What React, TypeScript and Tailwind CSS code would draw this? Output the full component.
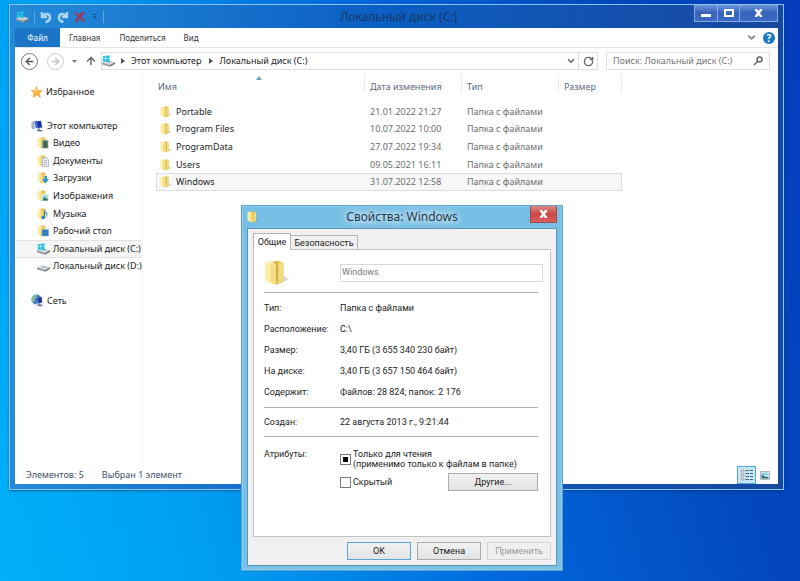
import type { ReactNode } from "react";
import { ArrowLeft, ArrowRight, ArrowUp, ChevronDown, RotateCw } from "lucide-react";

const places = [
  { name: "Видео", kind: "video" },
  { name: "Документы", kind: "docs" },
  { name: "Загрузки", kind: "downloads" },
  { name: "Изображения", kind: "pictures" },
  { name: "Музыка", kind: "music" },
  { name: "Рабочий стол", kind: "desktop" },
];

const files = [
  { name: "Portable", date: "21.01.2022 21:27" },
  { name: "Program Files", date: "10.07.2022 10:00" },
  { name: "ProgramData", date: "27.07.2022 19:34" },
  { name: "Users", date: "09.05.2021 16:11" },
  { name: "Windows", date: "31.07.2022 12:58", selected: true },
];

const details = [
  ["Тип:", "Папка с файлами"],
  ["Расположение:", "C:\\"],
  ["Размер:", "3,40 ГБ (3 655 340 230 байт)"],
  ["На диске:", "3,40 ГБ (3 657 150 464 байт)"],
  ["Содержит:", "Файлов: 28 824; папок: 2 176"],
];

function Drive({ system = false }: { system?: boolean }) {
  return (
    <svg viewBox="0 0 13 12" className="h-3 w-[13px] shrink-0" aria-hidden="true">
      <path d="M0 7.5 5 5l8 2.3-5 2.6z" fill="#d3d7da" />
      <path d="M0 7.5v1.7l8 2.6V9.9z" fill="#8f979c" />
      <path d="m8 9.9 5-2.6V9l-5 2.8z" fill="#6c757b" />
      <path d="m5 7.2 2.6-1.1 2.4.7-2.5 1.2z" fill="#b6bcc0" />
      <path d="M10.8 9.2h1" stroke="#6fd46a" strokeWidth=".8" />
      {system && <path d="M.8 1.2 3.6.8v2.8H.8zM4.1.7 7.6.2v3.4H4.1zM.8 4.1h2.800v2.700L.8 6.500zM4.1 4.1h3.500v3l-3.500-.3z" fill="#20bfe0" />}
    </svg>
  );
}

function Folder({ className, kind }: { className: string; kind?: string }) {
  return (
    <svg viewBox="0 0 24 24" className={className} aria-hidden="true">
      <path d="m11 23 12-5-4-3-8 2z" fill="#888" opacity=".35" />
      <path d="M5 2 13 .5 18 3v17l-8 3z" fill="#e6c65e" />
      <path d="m13 3 5-1v17l-5 2.500z" fill="#f3dc80" />
      <path d="m8 3 5-1v17l-3 3z" fill="#cfae4a" />
      <path d="M1 2.500 6 1l5 3v19L1 19z" fill="#fbeeA6" />
      <path d="m6 4 5 1v18l-5-2z" fill="#f4dd82" />
      {kind === "video" && <path d="M11 7h11v15H11zM13 9v2m0 2v2m0 2v2M20 9v2m0 2v2m0 2v2" fill="#40604c" stroke="#8fa799" strokeWidth="1.5" />}
      {kind === "docs" && <path d="M11 6h9l3 3v14H11zM13 11h7m-7 4h7m-7 4h7" fill="#eef1fa" stroke="#a0a7cc" strokeWidth="1.5" />}
      {kind === "downloads" && <path d="M15 8h5v6h4l-7 9-7-9h5z" fill="#2798dd" />}
      {kind === "pictures" && (
        <>
          <path d="M10 9h13v13H10z" fill="#a7ddec" stroke="#fff" />
          <path d="m11 21 4-8 3 5 2-2 2 5z" fill="#33715d" />
        </>
      )}
      {kind === "music" && <path d="M14 3c1 5 8 5 7 12h-2c0-3-1-5-3-6v9c0 6-8 5-7 1 0-3 3-4 5-3z" fill="#2682d0" />}
      {kind === "desktop" && <path d="M10 9h13v13H10z" fill="#397dc8" stroke="#78a9db" />}
    </svg>
  );
}

function Star() {
  return (
    <svg viewBox="0 0 24 24" className="size-3 shrink-0" aria-hidden="true">
      <path d="m11 1 3 8 9 0-7 6 3 8-8-5-7 5 2-9-6-5 8-1z" fill="#f9b43c" stroke="#e9952a" />
      <path d="m11 4 1 7-7-1z" fill="#ffe39a" />
    </svg>
  );
}

function Computer() {
  return (
    <svg viewBox="0 0 26 24" className="h-3 w-[13px] shrink-0" aria-hidden="true">
      <path d="m1 4 6-1v16l-6-2z" fill="#9caec8" />
      <path d="m6 2 15-1 2 15-14 2z" fill="#c5d2e2" />
      <path d="m7 3 13-1 2 13-12 1z" fill="#1730a8" />
      <path d="m7 3 5 0 2 12-4 1z" fill="#4a6ddb" />
      <path d="m13 17 4 0 1 3 6 0-3 3-11-1 4-2z" fill="#667284" />
    </svg>
  );
}

function Network() {
  return (
    <svg viewBox="0 0 26 26" className="size-[13px] shrink-0" aria-hidden="true">
      <circle cx="11" cy="11" r="10" fill="#3576b5" />
      <path d="M3 6c4-6 9-5 10-3l-5 5-1 7-4 2C0 12 1 9 3 6z" fill="#7cc49a" />
      <path d="m9 7 13-2 1 13-12 2z" fill="#b9cde2" />
      <path d="m10 8 11-2 1 11-10 1z" fill="#142c9c" />
      <path d="m10 8 4-1 2 10-4 1z" fill="#4468d0" />
      <path d="m15 19 3 0 1 2 5 1-4 3-10-2 5-1z" fill="#5f7797" />
    </svg>
  );
}

function TreeRow({ icon, children, nested, selected }: { icon: ReactNode; children: ReactNode; nested?: boolean; selected?: boolean }) {
  return (
    <a
      href="#"
      className={`flex min-h-0 flex-1 items-center gap-[3px] whitespace-nowrap border-y ${nested ? "pl-[21px]" : "pl-[15px]"} ${selected ? "border-[#e3e3e3] bg-[#f5f5f5]" : "border-transparent"}`}
    >
      {icon}
      {children}
    </a>
  );
}

function TitleBar() {
  return (
    <header className="relative flex h-[23px] items-center pl-px text-[#173860]">
      <div className="flex items-center gap-[5px] text-[#a9d4f5]">
        <Drive system />
        <span className="h-3 w-px bg-white/30" />
        <button aria-label="Отменить">
          <svg viewBox="0 0 12 12" className="size-3" fill="none" stroke="currentColor" strokeWidth="2.5">
            <path d="M2 1v5h5M2.500 5.500C5 1.500 10 2.500 10 6.500 10 9 8 10.500 5.500 11" />
          </svg>
        </button>
        <button aria-label="Вернуть">
          <svg viewBox="0 0 12 12" className="size-3" fill="none" stroke="currentColor" strokeWidth="2.5">
            <path d="M10 1v5H5M9.500 5.500C7 1.500 2 2.500 2 6.500 2 9 4 10.500 6.500 11" />
          </svg>
        </button>
        <button aria-label="Удалить">
          <svg viewBox="0 0 12 12" className="size-3" fill="none" stroke="#9a3d5b" strokeWidth="2.5">
            <path d="M1 2c4 2 7 5 9 9M10 1C6 4 4 7 2 11" />
          </svg>
        </button>
        <button aria-label="Настройка панели" className="px-px">
          <svg viewBox="0 0 6 6" className="size-[5px]">
            <path d="M1 0h4v1H1zM1 3h4L3 5z" fill="#123c70" />
          </svg>
        </button>
        <span className="h-3 w-px bg-white/30" />
      </div>
      <h1 className="absolute inset-x-28 pl-1 text-center text-[12px] leading-4">Локальный диск (C:)</h1>
      <div className="absolute top-0 right-0 flex h-[17px] border border-t-0 border-[#84a9e4] bg-linear-to-b from-[#6f94d8] via-[#3563ba] to-[#3d6bc4] text-white">
        <button aria-label="Свернуть" className="flex w-[23px] items-end justify-center border-r border-[#84a9e4] pb-1">
          <span className="h-[3px] w-[10px] bg-white" />
        </button>
        <button aria-label="Развернуть" className="flex w-[22px] items-center justify-center border-r border-[#84a9e4]">
          <span className="h-2 w-[10px] border-2 border-white" />
        </button>
        <button aria-label="Закрыть" className="flex w-[37px] items-center justify-center">
          <svg viewBox="0 0 9 8" className="h-2 w-[9px]" stroke="currentColor" strokeWidth="2.5">
            <path d="m1.500 0 6 8M7.500 0l-6 8" />
          </svg>
        </button>
      </div>
    </header>
  );
}

function AddressBar() {
  return (
    <div className="flex h-[27px] items-center border-t border-[#e3e5e7] pr-2 pl-[6px] text-[#222]">
      <button aria-label="Назад" className="flex size-[17px] items-center justify-center rounded-full border border-[#777] text-[#555]">
        <ArrowLeft size={11} strokeWidth={3} />
      </button>
      <button aria-label="Вперёд" className="ml-[9px] flex size-[17px] items-center justify-center rounded-full border border-[#ccc] text-[#c4c4c4]">
        <ArrowRight size={11} strokeWidth={3} />
      </button>
      <button aria-label="Журнал" className="ml-2">
        <svg viewBox="0 0 5 3" className="h-[3px] w-[5px]"><path d="M0 0h5L2.500 3z" fill="#777" /></svg>
      </button>
      <button aria-label="Вверх" className="ml-2 text-[#666]">
        <ArrowUp size={12} strokeWidth={3} />
      </button>
      <nav className="ml-1 flex h-[18px] flex-1 items-center border border-[#dcdee0]">
        <Drive system />
        <svg viewBox="0 0 4 6" className="mx-[6px] h-[6px] w-1"><path d="m0 0 4 3-4 3z" fill="#555" /></svg>
        <a href="#">Этот компьютер</a>
        <svg viewBox="0 0 4 6" className="mx-[7px] h-[6px] w-1"><path d="m0 0 4 3-4 3z" fill="#555" /></svg>
        <a href="#">Локальный диск (C:)</a>
        <button aria-label="Предыдущие расположения" className="ml-auto px-[2px] text-[#666]">
          <ChevronDown size={10} strokeWidth={4} />
        </button>
        <button aria-label="Обновить" className="flex h-full w-[19px] items-center justify-center border-l border-[#dcdee0] text-[#666]">
          <RotateCw size={11} strokeWidth={3} />
        </button>
      </nav>
      <label className="ml-2 flex h-[18px] w-[164px] items-center border border-[#dcdee0] px-[6px] text-[#666]">
        <input aria-label="Поиск" placeholder="Поиск: Локальный диск (C:)" className="w-full min-w-0 outline-none placeholder:text-[#757575]" />
        <svg viewBox="0 0 10 10" className="size-[10px] shrink-0" fill="none" stroke="currentColor" strokeWidth="1.5">
          <circle cx="6.500" cy="3.500" r="2.500" />
          <path d="M4.700 5.300 1 9" />
        </svg>
      </label>
    </div>
  );
}

function Explorer() {
  return (
    <section className="flex flex-1 flex-col border border-[#8cc4ee] bg-linear-to-r from-[#258ad8] via-[#0b5dc2] to-[#17489f] px-[5px] pb-[5px] text-[9px] leading-4 text-[#222] shadow-[0_1px_2px_#00306080]">
      <TitleBar />
      <div className="flex flex-1 flex-col bg-white">
        <div className="flex h-[19px] items-center text-[8px] text-[#333]">
          <button className="h-full w-[45px] bg-[#1b74c5] text-white">Файл</button>
          <button className="ml-[9px]">Главная</button>
          <button className="ml-[19px]">Поделиться</button>
          <button className="ml-[18px]">Вид</button>
          <button aria-label="Развернуть ленту" className="ml-auto text-[#888]">
            <ChevronDown size={11} strokeWidth={4} />
          </button>
          <button aria-label="Справка" className="mr-[3px] ml-[6px] flex size-3 items-center justify-center rounded-full bg-[#1979c0] text-[10px] font-bold text-white">
            ?
          </button>
        </div>
        <AddressBar />

        <div className="flex flex-1">
          <nav className="w-32 border-r border-[#f5f5f5] pt-[9px] pl-px">
            <div className="flex h-[17px]">
              <TreeRow icon={<Star />}>Избранное</TreeRow>
            </div>
            <div className="mt-[17px] flex h-[158px] flex-col">
              <TreeRow icon={<Computer />}>Этот компьютер</TreeRow>
              {places.map((p) => (
                <TreeRow key={p.kind} nested icon={<Folder kind={p.kind} className="mr-px size-3 shrink-0" />}>
                  {p.name}
                </TreeRow>
              ))}
              <TreeRow nested selected icon={<Drive system />}>Локальный диск (C:)</TreeRow>
              <TreeRow nested icon={<Drive />}>Локальный диск (D:)</TreeRow>
            </div>
            <div className="mt-[17px] flex h-[17px]">
              <TreeRow icon={<Network />}>Сеть</TreeRow>
            </div>
          </nav>

          <div className="relative pl-[13px]">
            <svg viewBox="0 0 6 4" className="absolute top-[2px] left-[113px] h-1 w-[6px]">
              <path d="m0 4 3-4 3 4z" fill="#6ba2c0" />
            </svg>
            <table className="w-[466px] table-fixed border-collapse text-left">
              <thead>
                <tr className="h-[29px] align-top text-[#5a6b80]">
                  <th className="w-[209px] p-0 font-normal"><div className="h-[18px] border-r border-[#e8ebee] pt-[5px] pl-[2px]">Имя</div></th>
                  <th className="w-[97px] p-0 font-normal"><div className="h-[18px] border-r border-[#e8ebee] pt-[5px] pl-[5px]">Дата изменения</div></th>
                  <th className="w-[97px] p-0 font-normal"><div className="h-[18px] border-r border-[#e8ebee] pt-[5px] pl-[5px]">Тип</div></th>
                  <th className="p-0 font-normal"><div className="h-[18px] border-r border-[#e8ebee] pt-[5px] pl-[5px]">Размер</div></th>
                </tr>
              </thead>
              <tbody className="h-[88px] text-[#6d6d6d]">
                {files.map((f) => (
                  <tr key={f.name} className={f.selected ? "bg-[#f7f7f7] outline outline-[#dedede] -outline-offset-1" : ""}>
                    <td className="p-0 text-[#222]">
                      <div className="flex items-center gap-1 pl-1">
                        <Folder className="size-3" />
                        {f.name}
                      </div>
                    </td>
                    <td className="p-0 pl-[5px]">{f.date}</td>
                    <td className="p-0 pl-[5px]">Папка с файлами</td>
                    <td className="p-0" />
                  </tr>
                ))}
              </tbody>
            </table>
          </div>
        </div>

        <footer className="flex h-[18px] items-center gap-[18px] pr-2 pl-[11px] text-[#3d4d64]">
          <span>Элементов: 5</span>
          <span>Выбран 1 элемент</span>
          <div className="ml-auto flex items-center gap-1">
            <button aria-label="Таблица" className="flex h-[18px] w-[19px] items-center justify-center border border-[#4caed5] bg-[#c6e8f6]">
              <svg viewBox="0 0 13 12" className="h-3 w-[13px]">
                <path d="M1 1h3v2H1zm0 4h3v2H1zm0 4h3v2H1z" fill="#f4dada" stroke="#a08c90" strokeWidth=".6" />
                <path d="M5.500 1.500H9m1 0h3M5.500 4.500H9m1 0h3M5.500 7.500H9m1 0h3M5.500 10.500H9m1 0h3" stroke="#48647b" />
              </svg>
            </button>
            <button aria-label="Крупные значки">
              <svg viewBox="0 0 10 9" className="h-[9px] w-[10px]">
                <path d="M.5.5h9v8h-9z" fill="#e8f5f7" stroke="#b3b9bc" />
                <path d="M1.500 1.500h7v3h-7z" fill="#8bd1df" />
                <path d="m1.500 7.500 0-4 3 2 4 .5v1.500z" fill="#27657a" />
              </svg>
            </button>
          </div>
        </footer>
      </div>
    </section>
  );
}

function Properties() {
  return (
    <section
      role="dialog"
      aria-label="Свойства: Windows"
      className="absolute top-[205px] left-[241px] w-[322px] border border-[#5d9fc6] bg-[#77bfe5] px-[5px] pb-1 font-[Roboto,sans-serif] text-[9px] leading-3 text-[#1c1c1c] shadow-[inset_0_0_0_1px_#8ed0ee]"
    >
      <header className="relative flex h-[22px] items-center">
        <Folder className="size-3" />
        <h2 className="absolute inset-x-8 text-center font-['Noto_Sans',sans-serif] text-[12px] leading-4 text-[#24384a] [text-shadow:0_0_6px_white,0_0_10px_white]">
          Свойства: Windows
        </h2>
        <button
          aria-label="Закрыть"
          className="absolute top-0 right-0 flex h-[17px] w-[27px] items-center justify-center border border-t-0 border-[#a24a50] bg-linear-to-b from-[#dd8b88] via-[#cc4746] to-[#d8605d] text-white"
        >
          <svg viewBox="0 0 9 8" className="h-2 w-[9px]" stroke="currentColor" strokeWidth="2.5">
            <path d="m1.500 0 6 8M7.500 0l-6 8" />
          </svg>
        </button>
      </header>

      <div className="border border-[#5a96b8] bg-[#f0f0f0] px-[5px] pt-1 pb-[5px]">
        <div role="tablist" className="flex items-end">
          <button role="tab" aria-selected="true" className="relative -mb-px h-[17px] w-[38px] border border-b-0 border-[#b5b5b5] bg-white">
            Общие
          </button>
          <button role="tab" aria-selected="false" className="h-[14px] w-[67px] border border-b-0 border-l-0 border-[#b5b5b5] whitespace-nowrap">
            Безопасность
          </button>
        </div>

        <form className="h-[288px] border border-[#c2c2c2] bg-white pt-[10px] pr-3 pl-[10px]">
          <div className="-mr-[5px] flex items-center">
            <Folder className="size-[26px]" />
            <input aria-label="Имя папки" defaultValue="Windows" className="ml-[50px] h-[18px] min-w-0 flex-1 border border-[#d8d8d8] px-px pb-[2px] text-[#777] outline-none" />
          </div>
          <hr className="mt-[6px] border-[#b0b0b0]" />
          <dl className="mt-[5px] flex h-[104px] flex-col">
            {details.map(([k, v]) => (
              <div key={k} className="flex flex-1 items-center">
                <dt className="w-[76px]">{k}</dt>
                <dd>{v}</dd>
              </div>
            ))}
          </dl>
          <hr className="mt-[5px] border-[#b0b0b0]" />
          <dl className="flex h-7 items-center">
            <dt className="w-[76px]">Создан:</dt>
            <dd>22 августа 2013 г., 9:21:44</dd>
          </dl>
          <hr className="border-[#b0b0b0]" />
          <fieldset className="mt-[11px] flex">
            <span className="w-[76px] shrink-0">Атрибуты:</span>
            <div className="flex-1">
              <label className="flex items-center gap-[2px] pt-px leading-[10px] whitespace-nowrap">
                <input
                  type="checkbox"
                  defaultChecked
                  className="flex size-[11px] shrink-0 appearance-none items-center justify-center border border-[#777] bg-white before:size-[5px] before:bg-black before:content-[''] [&:not(:checked)]:before:hidden"
                />
                <span>
                  Только для чтения
                  <br />
                  (применимо только к файлам в папке)
                </span>
              </label>
              <div className="mt-1 flex items-center justify-between">
                <label className="flex items-center gap-[2px]">
                  <input type="checkbox" className="size-[11px] appearance-none border border-[#777] bg-white" />
                  Скрытый
                </label>
                <button type="button" className="h-[18px] w-[90px] border border-[#aaa] bg-linear-to-b from-[#f1f1f1] to-[#e3e3e3]">
                  Другие...
                </button>
              </div>
            </div>
          </fieldset>
        </form>

        <div className="mt-[5px] flex justify-end gap-[6px]">
          <button className="h-[18px] w-16 border border-[#5aa5d8] bg-linear-to-b from-[#f1f1f1] to-[#e3e3e3]">OK</button>
          <button className="h-[18px] w-16 border border-[#aaa] bg-linear-to-b from-[#f1f1f1] to-[#e3e3e3]">Отмена</button>
          <button disabled className="h-[18px] w-16 border border-[#d5d5d5] bg-[#efefef] text-[#9a9a9a]">Применить</button>
        </div>
      </div>
    </section>
  );
}

export default function App() {
  return (
    <main className="relative flex min-h-screen flex-col bg-[linear-gradient(75deg,#00b0f8_0%,#009bf0_25%,#0069dc_52%,#0448bd_80%,#043dbd_100%)] pt-1 pr-4 pb-[91px] pl-[9px] font-['Noto_Sans',sans-serif]">
      <Explorer />
      <Properties />
    </main>
  );
}
